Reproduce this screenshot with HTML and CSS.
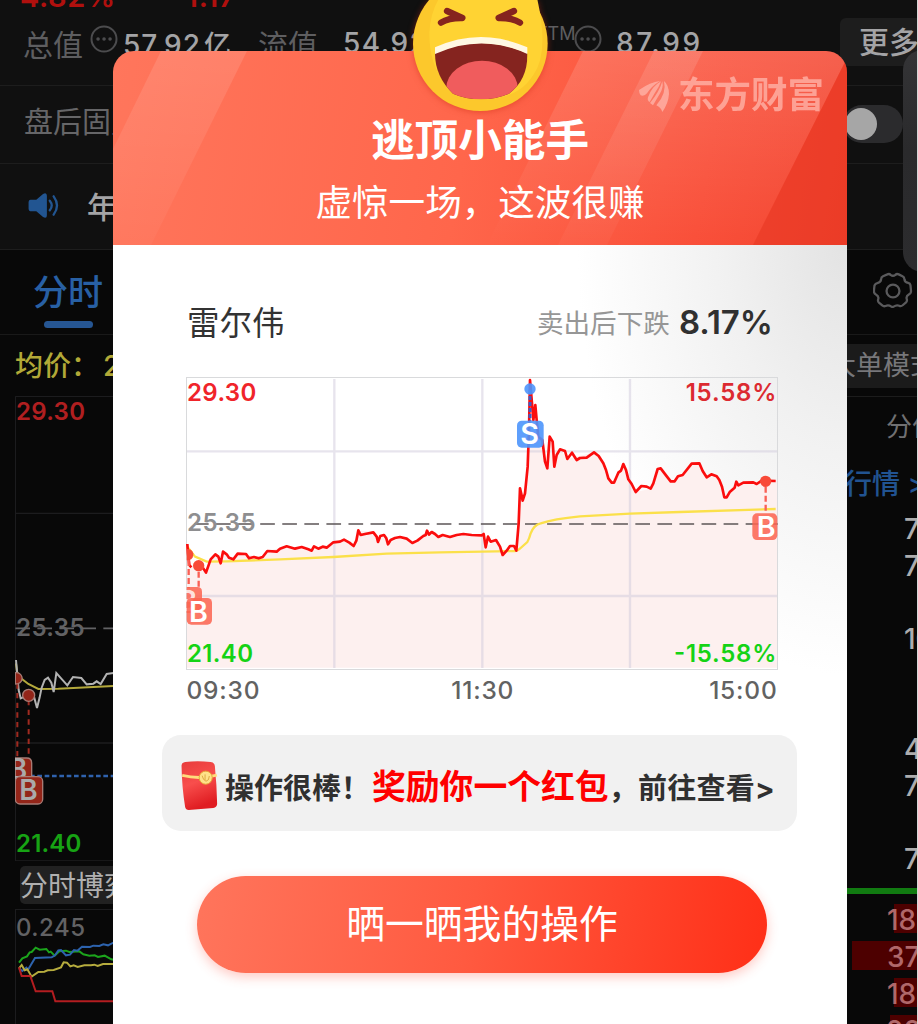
FILE: index.html
```html
<!DOCTYPE html>
<html lang="zh-CN">
<head>
    <meta charset="UTF-8">
    <meta name="viewport" content="width=device-width, initial-scale=1.0">
    <title>逃顶小能手</title>
    <link rel="stylesheet" href="styles.css">
</head>
<body>
    <div class="app">
        <!-- Quote header -->
        <div class="quote">
            <div class="quote-change"><span>-4.82%</span><span>-1.17</span></div>
            <div class="quote-row">
                <span class="label">总值</span>
                <svg class="more-dot" viewBox="0 0 28 28"><circle cx="14" cy="14" r="12.5"/><path d="M8 14h.1M14 14h.1M20 14h.1"/></svg>
                <b class="cap">57.92<i>亿</i></b>
                <span class="label float-label">流值</span>
                <b class="float-cap">54.92</b>
                <span class="ttm">TTM</span>
                <svg class="more-dot" viewBox="0 0 28 28"><circle cx="14" cy="14" r="12.5"/><path d="M8 14h.1M14 14h.1M20 14h.1"/></svg>
                <b class="pe">87.99</b>
                <span class="more-btn">更多</span>
            </div>
        </div>
        <div class="after-hours">
            <span>盘后固定</span>
            <div class="toggle"></div>
        </div>
        <div class="notice">
            <svg class="speaker" viewBox="0 0 32 28">
                <path class="horn" d="M2 8h6l7-6q4-2 4 2v20q0 4-4 2l-7-6H3q-3 0-3-3v-6q0-3 2-3z"/>
                <path class="wave" d="M22 9q4 5 0 10M26 4.500q7 9.500 0 19"/>
            </svg>
            <span>年报</span>
        </div>
        <div class="tabs">
            <span class="tab">分时</span>
            <svg class="gear" viewBox="0 0 40 40">
                <path d="M14 2.500q2-1 3.500.5 2.500 2 5 0Q24 1.500 26 2.500l4 2q2 1 2 3 .3 3.500 4 4 2 .4 2.400 2.500l.5 5v2q-.5 2-2 2.500-3.500 2-2.400 5 .7 2-.8 3.500l-3.500 3q-1.500 1.300-3.500.6-3-1.400-6 .8-1.200.8-2.500 0-3-2-6-.6-2 .7-3.500-.6l-3.500-3q-1.500-1.500-.8-3.500 1.100-3-2.400-5-1.500-.5-2-2.500v-2l.5-5Q1.500 12 3.500 11.600q3.700-.6 4-4.100 0-2 2-3z"/>
                <circle cx="20" cy="20" r="6.800"/>
            </svg>
        </div>
        <div class="market">
            <div class="left-col">
                <div class="avg">均价：<span>25.35</span></div>
                <svg class="dark-chart" viewBox="45 -702 375 1395">
                    <path class="frame" d="M46-701H420M46-701V693M46-350H420M46 339H420M46 693H420"/>
                    <text x="48" y="-629" class="up" textLength="207">29.30</text>
                    <text x="48" y="17" class="flat" textLength="206">25.35</text>
                    <text x="48" y="667" class="down" textLength="196">21.40</text>
                    <path class="mid" d="M46-5H420"/>
                    <path class="avg-line" d="M48 100l3 25 12 20 22 17 30 15 60-1 165-8h60"/>
                    <path class="price" d="M48 90l8 90 6 25 23-10 17 5 9 34 8-32 6-29 9-23 10-7 10 15 7 28 8-57 17 19 16 18 17-25 25 3 16 19 20-2 10-7 12 8 18-30 20-3h40"/>
                    <path class="cost" d="M46 438H420"/>
                    <g class="marks">
                        <path d="M52 160V400M86 210V430"/>
                        <path class="dot" d="M46 128a17 17 0 0 1 8 33l-8 1z"/>
                        <circle class="dot" cx="86" cy="196" r="18"/>
                        <path class="badge" d="M46 384h34q15 0 15 15v50q0 15-15 15H46z"/>
                        <text x="26" y="448">B</text>
                        <rect class="badge" x="46" y="440" width="82" height="82" rx="14"/>
                        <text x="58" y="510">B</text>
                    </g>
                </svg>
                <div class="game-btn">分时博弈</div>
                <svg class="sub-chart" viewBox="45 837 375 345">
                    <path class="frame" d="M46 1200V838H420"/>
                    <text x="48" y="919" class="flat" textLength="207">0.245</text>
                    <path class="g" d="M57 998l10-13 14-6 8-12 6-1 12-13 12 6 20-2 8 10 5-2 12 12 14-13 20-2 10 4 30-2 12 9 18 4 16-1 10 5 20-4 20 11 38 8h60"/>
                    <path class="b" d="M57 1015l10 8 12-10 5 6 21-35 50-2 10-6 10-15 8-1 15 16 12-2 12-14 10 2 14-12 24 1 10-4 18 1 12-5 14 3 16-8 60-2"/>
                    <path class="y" d="M57 1015l8-10 9 16 8-3 13 22 20-14 18-1 10-4 18-1 22-8 8-15 10 1 10 11 10-3 12 5 20-5h20l10-2 10 4 16-6h90"/>
                    <path class="r" d="M57 1012l8 26h26l16 46h50l9 30h250"/>
                </svg>
            </div>
            <div class="right-col">
                <div class="big-order">大单模式</div>
                <div class="dist">分价</div>
                <div class="link">行情 &gt;</div>
                <ul class="nums">
                    <li>70</li><li>70</li><li></li><li>10</li><li></li>
                    <li></li><li>40</li><li>70</li><li></li><li>70</li>
                </ul>
                <div class="green-bar"></div>
                <ul class="vols">
                    <li class="v1">18</li>
                    <li class="v2">37</li>
                    <li class="v1">18</li>
                    <li class="v3">20</li>
                </ul>
            </div>
        </div>
        <div class="drawer"></div>
    </div>

    <!-- Share dialog -->
    <div class="dialog">
        <svg class="emoji" viewBox="0 0 480 430">
            <defs>
                <clipPath id="mouth"><path d="M105 160q135-62 277 0 2 80-55 121-40 17-84 17-45 0-84-17Q105 230 105 160z"/></clipPath>
            </defs>
            <circle cx="241" cy="131" r="202" fill="#fcc82c"/>
            <path d="M88 100Q92 0 160-50H400Q455 150 400 225 360 290 270 296 88 290 88 100z" fill="#ffd333"/>
            <g clip-path="url(#mouth)">
                <path d="M90 90H400V310H90z" fill="#85241f"/>
                <ellipse cx="246" cy="264" rx="107" ry="82" fill="#f05c5d"/>
            </g>
            <path d="M105 142q137-62 277 0v20q-137-63-277 0z" fill="#fff8e3"/>
            <path class="eye" d="M141 33l46 21q-40-1-64 14M342 33l-46 21q40-1 64 14"/>
        </svg>
        <div class="dialog-head">
            <svg class="rays" viewBox="0 0 734 194" preserveAspectRatio="none">
                <defs>
                    <linearGradient id="glow" x1="0" y1="0" x2="0" y2="1">
                        <stop offset="0" stop-color="#fff" stop-opacity=".14"/>
                        <stop offset="1" stop-color="#fff" stop-opacity="0"/>
                    </linearGradient>
                    <linearGradient id="ray" x1="0" y1="0" x2="0" y2="1">
                        <stop offset="0" stop-color="#fff" stop-opacity=".12"/>
                        <stop offset="1" stop-color="#fff" stop-opacity=".03"/>
                    </linearGradient>
                </defs>
                <path d="M48 0H134L38 194H0V98z" fill="url(#ray)"/>
                <path d="M470 0H734V7L640 194H374z" fill="url(#glow)"/>
                <path d="M541 0H590L494 194H445z" fill="url(#ray)"/>
                <path d="M734 7V194H640z" fill="#e0301c" fill-opacity=".4"/>
            </svg>
            <div class="brand">
                <svg viewBox="0 0 90 96">
                    <path d="M0 30Q34 6 63 3 38 18 24 40 16 50 5 46 0 40 0 30zM66 4Q60 22 47 40L32 66Q24 62 27 52 38 20 66 4zM70 4Q74 24 62 42L42 76 33 69Q62 34 70 4zM75 3Q90 16 90 42 88 70 70 96 66 82 52 76 84 40 75 3z"/>
                </svg>
                <span>东方财富</span>
            </div>
            <h1>逃顶小能手</h1>
            <p>虚惊一场，这波很赚</p>
        </div>
        <div class="dialog-body">
            <div class="stock">
                <span class="name">雷尔伟</span>
                <span class="drop">卖出后下跌<b>8.17%</b></span>
            </div>
            <svg class="chart" viewBox="18 21 1776 879">
                <path class="area" d="M22 522L28 585 50 590 78 608 106 553 122 580 129 545 160 568 173 551 248 561 262 543 320 529 395 542 460 517 492 509 521 528 535 481 580 487 594 516 612 495 624 523 660 501 697 519 741 482 775 501 905 496 917 532 948 510 968 555 990 528 1009 542 1020 355 1028 392 1043 290 1050 30 1060 150 1066 105 1075 200 1087 210 1102 295 1109 200 1123 290 1140 238 1162 267 1242 247 1270 280 1295 338 1330 282 1367 366 1412 356 1433 297 1442 295 1480 334 1535 281 1558 280 1580 322 1610 319 1633 382 1669 335 1793 333V893H18V522z"/>
                <path class="grid" d="M18 244H1793M18 678H1793M463 27V894M907 27V894M1350 27V894"/>
                <rect class="border" x="19.500" y="22.500" width="1773" height="876"/>
                <path class="mid" d="M20 462H1793"/>
                <text x="21" y="93" class="up" textLength="208">29.30</text>
                <text x="21" y="484" class="flat" textLength="206">25.35</text>
                <text x="21" y="876" class="down" textLength="198">21.40</text>
                <text x="1517" y="93" class="up dim" textLength="272">15.58%</text>
                <text x="1482" y="876" class="down" textLength="307">-15.58%</text>
                <path class="avg-line" d="M22 530L45 560 80 575 140 574 300 568 460 561 620 551 780 547 1005 543Q1016 541 1022 534L1042 516Q1048 506 1052 490 1062 464 1082 460 1120 447 1200 439L1350 431 1500 426 1787 417"/>
                <path class="price" d="M22 522L24 550 28 585 34 592M68 592L78 608 92 568 106 553 115 560 122 580 129 545 140 553 147 563 160 568 173 551 198 552 207 565 222 561 236 565 248 561 262 543 290 545 300 536 320 529 345 536 365 531 385 538 395 542 402 529 415 536 428 530 440 533 460 517 480 515 492 509 508 518 521 528 529 512 535 481 542 495 555 492 580 487 590 500 594 516 601 498 612 495 619 505 624 523 632 510 645 504 660 501 680 506 697 519 712 512 730 498 737 495 741 482 747 494 755 486 765 492 775 501 788 495 810 501 830 495 850 492 875 495 905 496 911 492 917 532 924 500 932 515 948 510 960 530 968 555 980 542 990 528 1002 528 1009 542 1016 460 1020 355 1024 372 1028 392 1035 370 1043 290 1047 180 1050 30 1056 100 1060 150 1066 105 1070 150 1075 200 1087 210 1095 275 1102 295 1109 200 1118 215 1123 290 1130 255 1140 238 1155 243 1162 267 1176 248 1190 270 1200 264 1220 263 1242 247 1256 258 1270 280 1278 300 1285 325 1295 338 1302 338 1315 308 1323 302 1330 282 1338 300 1345 328 1355 342 1367 366 1384 348 1400 350 1412 356 1420 340 1433 297 1442 295 1458 316 1472 334 1484 334 1494 319 1508 315 1535 281 1558 280 1568 303 1580 322 1594 313 1610 319 1618 330 1626 350 1633 382 1640 382 1650 365 1664 353 1669 335 1675 346 1690 338 1720 337 1730 342 1745 332 1787 333"/>
                <g class="marks">
                    <path d="M26 570V655M56 605V655M1757 350V430"/>
                    <path class="dot" d="M20 537a17 17 0 0 1 8 33l-8 1z"/>
                    <circle class="dot" cx="56" cy="587" r="17"/>
                    <circle class="dot" cx="1757" cy="334" r="17"/>
                    <path class="badge" d="M20 651h32q14 0 14 14v50q0 14-14 14H20z"/>
                    <text class="faded" x="-5" y="722">B</text>
                    <rect class="badge" x="20" y="684" width="76" height="80" rx="14"/>
                    <text x="27" y="755">B</text>
                    <rect class="badge" x="1717" y="430" width="75" height="80" rx="14"/>
                    <text x="1730" y="501">B</text>
                </g>
                <g class="sell">
                    <path d="M1050 60V152"/>
                    <circle cx="1050" cy="57" r="17"/>
                    <rect x="1011" y="152" width="80" height="81" rx="14"/>
                    <text x="1021" y="223">S</text>
                </g>
            </svg>
            <div class="times"><span>09:30</span><span>11:30</span><span>15:00</span></div>
            <div class="reward">
                <svg class="packet" viewBox="0 0 112 150">
                    <defs>
                        <linearGradient id="pk" x1="0" y1="0" x2=".3" y2="1">
                            <stop offset="0" stop-color="#e83c3c"/>
                            <stop offset=".5" stop-color="#f84e4c"/>
                            <stop offset="1" stop-color="#e01d22"/>
                        </linearGradient>
                    </defs>
                    <path d="M12 3Q50-1 90 3q11 1 13 12 6 60 7 116 0 11-12 13l-75 6q-9 0-11-9Q2 80 1 14 2 4 12 3z" fill="url(#pk)"/>
                    <path d="M3 44q54 13 106-1" fill="none" stroke="#ffdc7c" stroke-width="9"/>
                    <circle cx="75" cy="51" r="20" fill="#ffe18a" stroke="#e5a637" stroke-width="3"/>
                    <path d="M64 45q3 14 12 17 10-2 10-16M73 41v17" fill="none" stroke="#ce8f24" stroke-opacity=".7" stroke-width="3"/>
                </svg>
                <span class="great">操作很棒！</span>
                <em>奖励你一个红包</em>
                <span class="go">，前往查看&gt;</span>
            </div>
            <button class="share-btn">晒一晒我的操作</button>
        </div>
    </div>
</body>
</html>
```
FILE: styles.css
```css
* {
    box-sizing: border-box;
}

body {
    margin: 0;
    background: #d8d8d8;
    font-family: Inter, 'Noto Sans CJK SC', sans-serif;
    height: 1024px;
    overflow: hidden;
    position: relative;
}

ul {
    margin: 0;
    padding: 0;
    list-style: none;
}

svg {
    display: block;
    flex: none;
}

/* page behind the dialog */
.app {
    position: relative;
    width: 917px;
    height: 1024px;
    overflow: hidden;
    background: #080808;
    color: #a4a4a6;
    white-space: nowrap;
}

.quote,
.after-hours,
.notice {
    background: #101010;
    border-bottom: 1px solid #1d1d1d;
}

.quote {
    height: 86px;
}

.quote-change {
    display: flex;
    gap: 56px;
    height: 17px;
    padding-left: 6px;
    align-items: flex-end;
    font-size: 29px;
    font-weight: 600;
    line-height: 36px;
    letter-spacing: .6px;
    color: #b0100e;
}

.quote-change span {
    margin-bottom: 2px;
}

.quote-row {
    display: flex;
    height: 50px;
    align-items: center;
    padding-left: 23px;
}

.quote-row > * {
    flex: none;
}

.quote-row b {
    padding-top: 2px;
    font-size: 28px;
    font-weight: 500;
    letter-spacing: 1px;
}

.quote-row i {
    font-style: normal;
    font-size: 27px;
    margin-left: 3px;
}

.label {
    padding-top: 2px;
    font-size: 30px;
    color: #5e5e60;
}

.more-dot {
    width: 28px;
    height: 28px;
    margin: -7px 0 0 7px;
    fill: none;
    stroke: #4c4c4e;
    stroke-width: 2;
}

.more-dot path {
    stroke-width: 3.5;
    stroke-linecap: round;
}

.quote-row .cap {
    width: 134px;
    margin-left: 5px;
}

.float-label {
    width: 84px;
    margin-left: 1px;
}

.quote-row .float-cap {
    width: 194px;
    letter-spacing: 1.5px;
    margin-left: 1px;
}

.ttm {
    width: 37px;
    margin: -18px 0 0 -1px;
    font-size: 18px;
    color: #5e5e60;
}

.ttm + .more-dot {
    margin-left: 1px;
}

.quote-row .pe {
    width: 224px;
    margin-left: 14px;
    letter-spacing: 2.6px;
}

.more-btn {
    width: 90px;
    height: 48px;
    padding-left: 19px;
    border-radius: 6px;
    background: #1d1d1d;
    font-size: 30px;
    font-weight: 500;
    line-height: 49px;
}

.after-hours {
    display: flex;
    justify-content: space-between;
    align-items: center;
    height: 78px;
    padding: 0 14px 0 24px;
    font-size: 29px;
    line-height: 40px;
    color: #666668;
}

.after-hours span {
    margin-top: -3px;
}

.toggle {
    width: 60px;
    height: 38px;
    padding: 3px 2px;
    border-radius: 19px;
    background: #2b2b2d;
    margin-top: -2px;
}

.toggle::before {
    content: '';
    display: block;
    width: 32px;
    height: 32px;
    border-radius: 50%;
    background: #a6a6a6;
}

.notice {
    display: flex;
    align-items: center;
    gap: 27px;
    height: 86px;
    padding: 0 0 3px 28px;
    font-size: 30px;
    font-weight: 500;
}

.speaker {
    width: 32px;
    height: 27px;
}

.horn {
    fill: #225591;
}

.wave {
    fill: none;
    stroke: #225591;
    stroke-width: 2.4;
    stroke-linecap: round;
}

.tabs {
    display: flex;
    justify-content: space-between;
    height: 85px;
    padding: 17px 4px 0 33px;
    border-bottom: 1px solid #191919;
}

.tab {
    width: 70px;
    color: #2860a4;
    font-size: 35px;
    font-weight: 500;
    line-height: 50px;
}

.tab::after {
    content: '';
    display: block;
    width: 49px;
    height: 7px;
    margin: 4px 0 0 11px;
    border-radius: 4px;
    background: #265693;
}

.gear {
    width: 40px;
    height: 38px;
    margin-top: 5px;
    fill: none;
    stroke: #5a5a5c;
    stroke-width: 2.4;
}

.market {
    display: flex;
    justify-content: space-between;
}

.left-col {
    width: 140px;
    padding-left: 15px;
}

.avg {
    height: 61px;
    font-size: 28px;
    line-height: 63px;
    font-weight: 500;
    color: #b2a937;
}

.avg span {
    margin-left: 4px;
}

.dark-chart {
    width: 125px;
    height: 465px;
}

.dark-chart text,
.sub-chart text,
.chart text {
    font-size: 72px;
    font-weight: 600;
}

.sub-chart text {
    font-weight: 500;
}

.frame {
    fill: none;
    stroke: #1c1c1e;
    stroke-width: 4;
}

.dark-chart .up { fill: #b01f20; }
.dark-chart .flat,
.sub-chart .flat { fill: #626264; }
.dark-chart .down { fill: #17a314; }

.dark-chart .mid {
    stroke: #626264;
    stroke-width: 5;
    stroke-dasharray: 44 22;
    stroke-dashoffset: 0;
}

.dark-chart .avg-line,
.dark-chart .price,
.sub-chart path {
    fill: none;
    stroke-width: 6;
}

.dark-chart .avg-line { stroke: #b4a93c; }
.dark-chart .price { stroke: #b2b2b2; }

.sub-chart .frame {
    stroke-width: 4;
}

.dark-chart .cost {
    stroke: #2f62ad;
    stroke-width: 7;
    stroke-dasharray: 14 8;
}

.dark-chart .marks path {
    fill: none;
    stroke: #a02a20;
    stroke-width: 6;
    stroke-dasharray: 16 13;
}

.dark-chart .marks .dot,
.dark-chart .marks .badge {
    fill: #932519;
    stroke: #a77b75;
    stroke-width: 4;
    stroke-dasharray: none;
}

.dark-chart .marks text {
    font-size: 84px;
    fill: #aaa;
}

.game-btn {
    width: 120px;
    height: 38px;
    margin: 5px 0 5px 5px;
    border-radius: 5px;
    background: #212121;
    color: #b0b0b0;
    font-size: 28px;
    line-height: 40px;
}

.sub-chart {
    width: 125px;
    height: 115px;
}

.sub-chart .g { stroke: #1ca41c; }
.sub-chart .b { stroke: #2d63ae; }
.sub-chart .y { stroke: #b6ac3e; }
.sub-chart .r { stroke: #b31d20; }

.right-col {
    width: 90px;
    padding-top: 9px;
}

.big-order {
    height: 44px;
    background: #1b1b1b;
    color: #77777a;
    font-size: 27px;
    line-height: 44px;
    padding-left: 2px;
}

.dist {
    height: 61px;
    margin-top: 8px;
    padding-left: 59px;
    border-top: 1px solid #1c1c1c;
    color: #707072;
    font-size: 26px;
    line-height: 59px;
}

.link {
    height: 53px;
    padding-left: 17px;
    color: #215391;
    font-size: 28px;
    font-weight: 500;
    line-height: 55px;
}

.nums li {
    height: 36.7px;
    padding-left: 77px;
    font-size: 28px;
    font-weight: 500;
    line-height: 38px;
    color: #adadae;
}

.green-bar {
    height: 6px;
    margin: 11px 0 10px;
    background: #117b11;
}

.vols li {
    height: 29px;
    margin: 0 0 8px 67px;
    background: #4d0000;
    color: #b0686a;
    font-size: 28px;
    font-weight: 500;
    line-height: 33px;
    text-indent: -7px;
}

.vols .v2 {
    margin-left: 25px;
    text-indent: 35px;
}

.vols .v3 {
    margin-left: 63px;
    text-indent: -4px;
}

.drawer {
    position: absolute;
    top: 50px;
    left: 903px;
    width: 40px;
    height: 222px;
    border-radius: 22px;
    background: linear-gradient(#343436, #2a2a2c 45%, #2c2c2e);
}

/* dialog */
.dialog {
    position: absolute;
    top: 51px;
    left: 113px;
    width: 734px;
    height: 973px;
    display: flex;
    flex-direction: column;
}

.emoji {
    position: absolute;
    top: -51px;
    left: 287px;
    width: 160px;
    height: 143.3px;
    z-index: 2;
    filter: drop-shadow(0 1px 3px rgba(205, 45, 20, .5));
}

.eye {
    fill: none;
    stroke: #86241e;
    stroke-width: 19;
    stroke-linecap: round;
    stroke-linejoin: round;
}

.dialog-head {
    position: relative;
    height: 194px;
    border-radius: 21px 21px 0 0;
    overflow: hidden;
    background: linear-gradient(100deg, #ff765c, #ff664b 48%, #f94f39 80%, #f2442f);
    color: #fff;
    text-align: center;
}

.rays {
    position: absolute;
    inset: 0;
    width: 734px;
    height: 194px;
}

.brand {
    position: absolute;
    top: 21px;
    right: 23px;
    display: flex;
    align-items: center;
    gap: 9px;
    color: #ffb2a7;
    opacity: .8;
    font-size: 36.5px;
    font-weight: 700;
    line-height: 46px;
}

.brand svg {
    width: 30px;
    height: 32px;
    margin-top: 1px;
    fill: #ffb2a7;
}

.dialog-head h1 {
    position: relative;
    margin: 59px 0 0;
    font-size: 43.6px;
    font-weight: 700;
    line-height: 62px;
}

.dialog-head p {
    position: relative;
    margin: 0;
    font-size: 36.6px;
    font-weight: 400;
    line-height: 62px;
}

.dialog-body {
    flex: 1;
    display: flex;
    flex-direction: column;
    align-items: center;
    background: radial-gradient(ellipse 270px 430px at 100% 0, #e3e3e3, #f1f1f1 45%, #fff) #fff;
}

.stock {
    display: flex;
    justify-content: space-between;
    align-items: center;
    width: 586px;
    height: 56px;
    margin: 48px 0 28px;
}

.name {
    margin-top: -1px;
    font-size: 32.5px;
    color: #333;
}

.drop {
    display: flex;
    align-items: center;
    font-size: 26.6px;
    color: #969696;
}

.drop b {
    margin: 2px 0 0 9px;
    font-size: 33px;
    font-weight: 600;
    color: #303030;
}

.chart {
    width: 592px;
    height: 293px;
    margin-left: 4px;
}

.area { fill: #fdf0ef; }

.grid {
    stroke: #cfc9dc;
    stroke-opacity: .5;
    stroke-width: 7;
}

.border {
    fill: none;
    stroke: #d9dadc;
    stroke-width: 3;
}

.chart .mid {
    stroke: #5c5557;
    stroke-width: 5;
    stroke-dasharray: 44 22.200;
    stroke-dashoffset: -22;
}

.chart .up { fill: #f0242a; }
.chart .up.dim { fill: #dc2a30; }
.chart .flat { fill: #8e8e90; }
.chart .down { fill: #15d315; }

.chart .avg-line {
    fill: none;
    stroke: #fbe04a;
    stroke-width: 7;
}

.chart .price {
    fill: none;
    stroke: #fb0d0d;
    stroke-width: 8;
    stroke-linejoin: round;
}

.chart .marks path {
    fill: none;
    stroke: #f96055;
    stroke-width: 7;
    stroke-dasharray: 18 9;
}

.chart .marks .dot {
    fill: #f84a38;
    stroke: none;
}

.chart .marks .badge {
    fill: #fb6450;
    fill-opacity: .86;
    stroke: none;
}

.chart .marks text,
.chart .sell text {
    font-size: 86px;
    font-weight: 600;
    fill: #fff;
}

.chart .marks .faded {
    fill-opacity: .8;
}

.sell path {
    stroke: #4059c4;
    stroke-width: 9;
    stroke-dasharray: 12 6;
}

.sell circle,
.sell rect {
    fill: #4c95fc;
    fill-opacity: .9;
}

.times {
    display: flex;
    justify-content: space-between;
    width: 591px;
    height: 40px;
    margin-left: 4px;
    font-size: 24.500px;
    font-weight: 500;
    line-height: 40px;
    letter-spacing: .8px;
    color: #626262;
}

.times span:nth-child(2) {
    margin-left: -4px;
}

.reward {
    display: flex;
    align-items: center;
    width: 635px;
    height: 96px;
    margin: 25px 1px 0 0;
    padding-left: 19px;
    border-radius: 19px;
    background: #f1f1f1;
    color: #303030;
    font-size: 29px;
    font-weight: 700;
    line-height: 60px;
    white-space: nowrap;
}

.packet {
    width: 37px;
    height: 49px;
    margin: 5px 7px 0 0;
}

.great {
    width: 147px;
    margin-top: 11px;
}

.reward em {
    margin-top: 8px;
    font-style: normal;
    font-size: 33.8px;
    font-weight: 700;
    color: #f00;
}

.go {
    margin-top: 12px;
    letter-spacing: .3px;
}

.share-btn {
    width: 570px;
    height: 97px;
    margin: 45px 0 0 4px;
    padding: 0 0 7px;
    border: none;
    border-radius: 49px;
    background: linear-gradient(100deg, #ff755c, #ff5a40 48%, #ff2f17);
    box-shadow: 0 4px 12px rgba(255, 80, 60, .3);
    color: #fff;
    font-family: inherit;
    font-size: 38.8px;
    font-weight: 400;
}
```
